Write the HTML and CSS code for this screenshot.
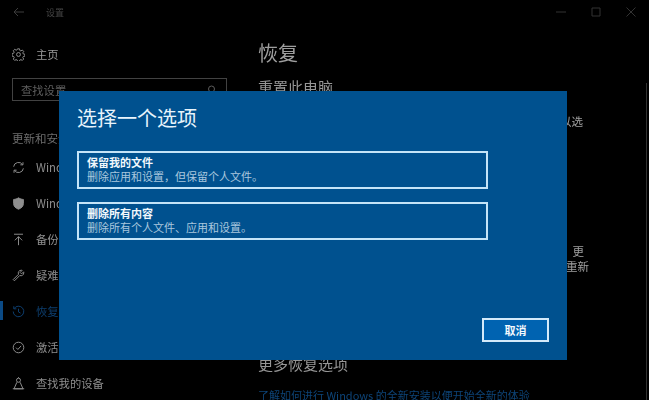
FILE: index.html
```html
<!DOCTYPE html>
<html lang="zh-CN">
<head>
<meta charset="utf-8">
<title>设置</title>
<link rel="stylesheet" href="styles.css">
</head>
<body>
<div class="window">
  <aside class="sidebar">
    <div class="titlebar">
      <svg class="back" width="12" height="10" viewBox="0 0 12 10"><path d="M5 1 1 5l4 4M1 5h10" /></svg>
      <span class="app-name">设置</span>
    </div>
    <div class="nav-item home">
      <svg class="icon" viewBox="0 0 16 16"><circle cx="8" cy="8" r="2.4"/><path d="M6.8 1h2.4l.4 2 1.3.6 1.8-1.1 1.7 1.7-1.1 1.8.6 1.3 2 .4v2.4l-2 .4-.6 1.3 1.1 1.8-1.7 1.7-1.8-1.1-1.3.6-.4 2H6.800l-.4-2-1.300-.6-1.800 1.100-1.700-1.700 1.100-1.800-.6-1.300-2-.4V6.800l2-.4.6-1.300-1.100-1.800 1.700-1.700 1.800 1.100 1.300-.6z"/></svg>
      <span>主页</span>
    </div>
    <div class="search">
      <span>查找设置</span>
      <svg class="search-icon" width="9" height="10" viewBox="0 0 9 10"><circle cx="4.500" cy="4" r="3"/><path d="M2.500 6.500 1 9"/></svg>
    </div>
    <div class="section">更新和安全</div>
    <nav class="nav">
      <div class="nav-item">
        <svg class="icon" viewBox="0 0 16 16"><path d="M2 7a6 6 0 0 1 11-2.500M14 9a6 6 0 0 1-11 2.500M13.500 1.500v3.200h-3.200M2.500 14.500v-3.200h3.200"/></svg>
        <span>Windows 更新</span>
      </div>
      <div class="nav-item">
        <svg class="icon" viewBox="0 0 16 16"><path class="solid" d="M8 1c2 1.300 4 2 6 2v5c0 3.500-2.500 5.800-6 7-3.500-1.200-6-3.500-6-7V3c2 0 4-.7 6-2z"/></svg>
        <span>Windows 安全中心</span>
      </div>
      <div class="nav-item">
        <svg class="icon" viewBox="0 0 16 16"><path d="M2.500 1.500h11M8 15V4.500M3.500 9 8 4.500 12.500 9"/></svg>
        <span>备份</span>
      </div>
      <div class="nav-item">
        <svg class="icon" viewBox="0 0 16 16"><path d="M1.500 13 8 6.500C7 4 8.500 1.500 11.500 1.500l1 .2-2.500 2.500 1.800 1.800 2.500-2.500.2 1c0 3-2.500 4.500-5 3.500L3 14.500z"/></svg>
        <span>疑难解答</span>
      </div>
      <div class="nav-item active">
        <svg class="icon" viewBox="0 0 16 16"><path d="M2.500 4.500A6.500 6.500 0 1 1 1.500 8M2.200 1.500v3.200h3.200M8 4.500V8.500l2.500 1.500"/></svg>
        <span>恢复</span>
      </div>
      <div class="nav-item">
        <svg class="icon" viewBox="0 0 16 16"><circle cx="8" cy="8" r="6.500"/><path d="m5 8.200 2.200 2.200L11.200 6"/></svg>
        <span>激活</span>
      </div>
      <div class="nav-item">
        <svg class="icon" viewBox="0 0 16 16"><circle cx="8" cy="4" r="2.500"/><path d="M8 1V0M6 6.500 2.500 14.500h11L10 6.500M1 14.500h14"/></svg>
        <span>查找我的设备</span>
      </div>
    </nav>
  </aside>

  <main class="content">
    <div class="controls">
      <svg width="10" height="10" viewBox="0 0 10 10"><path d="M0 5h10"/></svg>
      <svg width="10" height="10" viewBox="0 0 10 10"><path d="M1 1h8v8H1z"/></svg>
      <svg width="10" height="10" viewBox="0 0 10 10"><path d="m.5.500 9 9m0-9-9 9"/></svg>
    </div>
    <h1>恢复</h1>
    <h2>重置此电脑</h2>
    <p class="frag first">如果电脑未正常运行，重置电脑可能会解决问题。以选</p>
    <p class="frag second">如果你遇到问题，可以回退到之前的版本，更</p>
    <p class="frag third">这些设置可能需要重新</p>
    <h2 class="more">更多恢复选项</h2>
    <a class="link">了解如何进行 Windows 的全新安装以便开始全新的体验</a>
    <div class="scrollbar"></div>
  </main>
</div>

<section class="dialog">
  <h3>选择一个选项</h3>
  <div class="options">
    <div class="option">
      <strong>保留我的文件</strong>
      <span>删除应用和设置，但保留个人文件。</span>
    </div>
    <div class="option">
      <strong>删除所有内容</strong>
      <span>删除所有个人文件、应用和设置。</span>
    </div>
  </div>
  <div class="actions"><button class="cancel">取消</button></div>
</section>
</body>
</html>
```
FILE: styles.css
```css
* { box-sizing: border-box; }
html, body { margin: 0; height: 100%; }
body {
  width: 649px;
  height: 400px;
  overflow: hidden;
  background: #000;
  position: relative;
  font-family: "Noto Sans CJK SC", "Liberation Sans", sans-serif;
  filter: blur(0.4px);
}
.window { display: flex; width: 649px; height: 400px; overflow: hidden; }

/* sidebar */
.sidebar { width: 258px; flex: none; }
.titlebar { height: 24px; display: flex; align-items: center; padding-left: 13px; }
.back { fill: none; stroke: #3c3c3c; stroke-width: 1; }
.app-name { margin-left: 21px; font-size: 9px; color: #444; }
svg { display: block; }
.icon { width: 13px; height: 13px; flex: none; fill: none; stroke: #8e8e8e; stroke-width: 1.200; }
.icon .solid { fill: #8e8e8e; }
.nav-item {
  height: 36px;
  display: flex;
  align-items: center;
  gap: 11px;
  padding-left: 12px;
  font-size: 11.300px;
  color: #8e8e8e;
  white-space: nowrap;
  position: relative;
}
.home { height: 36px; margin-top: 12px; color: #9c9c9c; }
.search {
  margin: 6px 31px 0 12px;
  height: 23px;
  border: 1px solid #424242;
  display: flex;
  align-items: center;
  justify-content: space-between;
  padding: 0 10px 0 8px;
  font-size: 11.300px;
  color: #5e5e5e;
}
.search-icon { fill: none; stroke: #5c5c5c; }
.section { margin: 28px 0 0 12px; font-size: 11.500px; line-height: 18px; color: #6c6c6c; }
.nav { margin-top: 2px; }
.active { color: #0d3f70; }
.active .icon { stroke: #0d3f70; }
.active::before {
  content: "";
  position: absolute;
  left: 0;
  top: 8px;
  width: 3px;
  height: 19px;
  background: #0b4a85;
}

/* main */
.content { flex: 1; position: relative; }
.controls {
  position: absolute;
  top: 7px;
  right: 13px;
  display: flex;
  gap: 25px;
}
.controls svg { fill: none; stroke: #333; }
h1 { margin: 38px 0 0; font-size: 20px; line-height: 30px; font-weight: 400; color: #9e9e9e; }
h2 { margin: 8px 0 0; font-size: 15px; line-height: 22px; font-weight: 400; color: #969696; }
.frag {
  margin: 0;
  width: 325px;
  text-align: right;
  font-size: 11.500px;
  line-height: 16px;
  color: #a0a0a0;
  white-space: nowrap;
}
.first { margin-top: 15px; }
.second { margin-top: 114px; width: 326px; }
.third { width: 331px; margin-top: -1px; }
.more { margin-top: 79px; }
.link {
  display: block;
  margin-top: 12px;
  font-size: 11px;
  line-height: 16px;
  color: #0d4478;
  white-space: nowrap;
}
.scrollbar {
  position: absolute;
  right: 2px;
  top: 83px;
  bottom: 0;
  width: 1px;
  background: #333;
}

/* dialog */
.dialog {
  position: absolute;
  left: 59px;
  top: 91px;
  width: 508px;
  height: 269px;
  background: #00518f;
  padding: 13px 18px 18px;
  display: flex;
  flex-direction: column;
  color: #fff;
}
h3 { margin: 0; font-size: 20px; line-height: 28px; font-weight: 400; color: #e8f4fc; }
.options { margin-top: 19px; display: flex; flex-direction: column; gap: 13px; }
.option {
  width: 411px;
  height: 38px;
  border: 2px solid #c4e4f8;
  padding: 2px 8px;
  display: flex;
  flex-direction: column;
  font-size: 11px;
  line-height: 15px;
  white-space: nowrap;
}
.option strong { color: #f2f8fc; font-weight: 700; }
.option span { color: #a9c7de; margin-top: -1px; }
.actions { margin-top: auto; display: flex; justify-content: flex-end; }
.cancel {
  width: 67px;
  height: 24px;
  background: #0063b1;
  border: 2px solid #d4eafa;
  color: #f4f9fd;
  font: 700 11px "Noto Sans CJK SC", sans-serif;
  padding: 0;
}
```
